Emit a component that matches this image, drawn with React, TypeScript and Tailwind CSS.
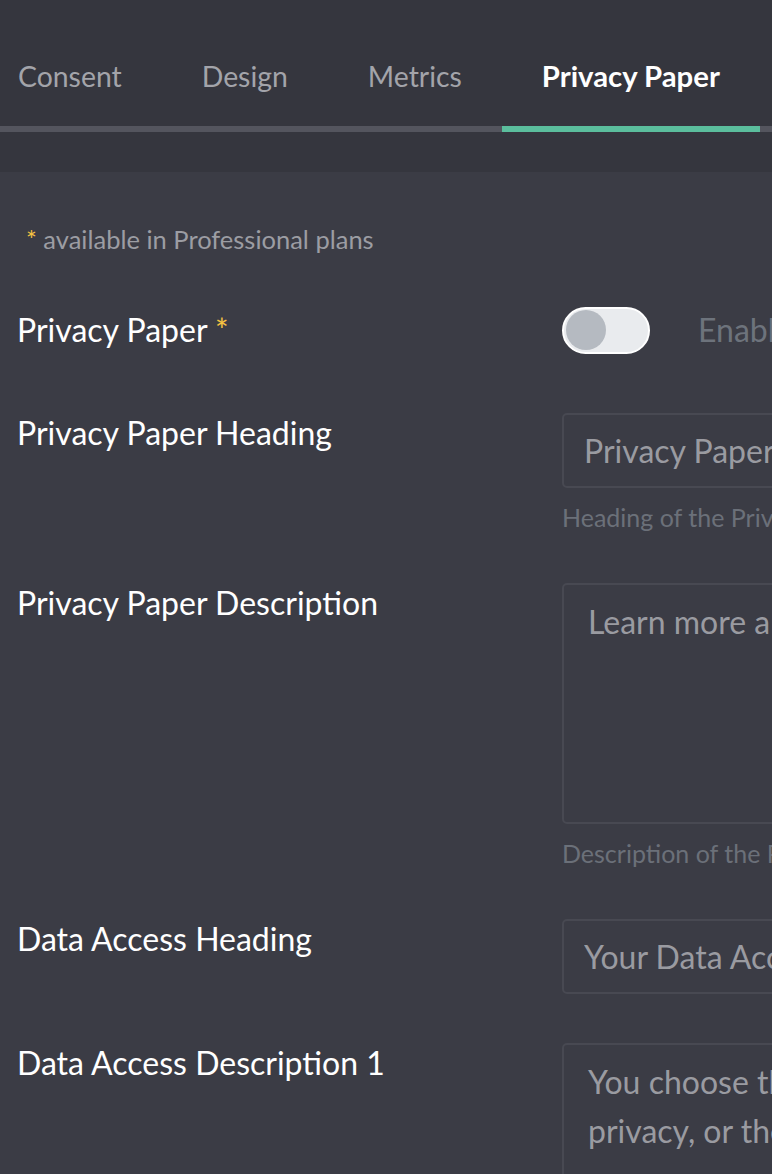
import { useState } from 'react'

const tabs = ['Consent', 'Design', 'Metrics', 'Privacy Paper']

function Toggle({ on, onChange }: { on: boolean; onChange: () => void }) {
  return (
    <button
      onClick={onChange}
      className={`w-[88px] h-[47px] rounded-full border-2 border-white p-[2px] flex items-center shrink-0 ${
        on ? 'bg-[#5bbe9d] justify-end' : 'bg-[#e9ebee] justify-start'
      }`}
    >
      <span className="block w-[40px] h-[40px] rounded-full bg-[#b5bac1]" />
    </button>
  )
}

function Row({ label, children }: { label: string; children: React.ReactNode }) {
  return (
    <div className="flex mb-[49px] w-[1300px]">
      <div className="w-[545px] shrink-0 text-[32px] leading-[40px] text-white whitespace-nowrap">
        {label}
      </div>
      <div className="w-[720px] shrink-0">{children}</div>
    </div>
  )
}

export default function App() {
  const [active, setActive] = useState('Privacy Paper')
  const [enabled, setEnabled] = useState(false)

  return (
    <div className="h-screen w-full overflow-hidden bg-[#3b3c45] font-['Lato','Noto_Sans',sans-serif]">
      {/* Tabs */}
      <div className="bg-[#35363e] pt-[58px] pb-[40px]">
        <div className="flex border-b-[6px] border-[#54555e] w-[1400px]">
          {tabs.map((t, i) => (
            <button
              key={t}
              onClick={() => setActive(t)}
              className={`${i === 0 ? 'pl-[18px]' : 'pl-10'} pr-10 pb-[32px] leading-[36px] -mb-[6px] border-b-[6px] whitespace-nowrap ${
                active === t
                  ? 'text-white font-bold text-[29.3px] border-[#5bbe9d]'
                  : 'text-[#a3a4aa] text-[28.4px] border-transparent'
              }`}
            >
              {t}
            </button>
          ))}
        </div>
      </div>

      {/* Form */}
      <div className="pl-[17px] pt-[52px]">
        <p className="pl-[9px] text-[25.5px] leading-[30px] text-[#9c9da3] mb-[52px] whitespace-nowrap">
          <span className="text-[#f5c242]">*</span> available in Professional plans
        </p>

        <div className="flex items-center mb-[59px] w-[1300px]">
          <div className="w-[545px] shrink-0 text-[32px] leading-[40px] text-white">
            Privacy Paper <span className="text-[#f5c242] align-top">*</span>
          </div>
          <Toggle on={enabled} onChange={() => setEnabled(!enabled)} />
          <span className="ml-[48px] text-[32px] text-[#6d737c] whitespace-nowrap">
            Enable Privacy Paper
          </span>
        </div>

        <Row label="Privacy Paper Heading">
          <input
            defaultValue="Privacy Paper"
            className="w-full h-[75px] rounded-[5px] border-2 border-[#484952] bg-transparent pl-[20px] text-[32px] text-[#9a9ba1] outline-none"
          />
          <p className="mt-[12px] text-[25px] leading-[34px] text-[#6b7079] whitespace-nowrap">
            Heading of the Privacy Paper
          </p>
        </Row>

        <Row label="Privacy Paper Description">
          <textarea
            defaultValue="Learn more about our data practices."
            className="block w-full h-[241px] resize-none rounded-[5px] border-2 border-[#484952] bg-transparent px-[24px] pt-[12px] text-[32px] leading-[49px] text-[#9a9ba1] outline-none"
          />
          <p className="mt-[12px] text-[25px] leading-[34px] text-[#6b7079] whitespace-nowrap">
            Description of the Privacy Paper
          </p>
        </Row>

        <Row label="Data Access Heading">
          <input
            defaultValue="Your Data Access"
            className="w-full h-[75px] rounded-[5px] border-2 border-[#484952] bg-transparent pl-[20px] text-[32px] text-[#9a9ba1] outline-none"
          />
        </Row>

        <Row label="Data Access Description 1">
          <textarea
            defaultValue={'You choose the level of protection for your\nprivacy, or the way your data is used by us.'}
            className="block w-full h-[241px] resize-none rounded-[5px] border-2 border-[#484952] bg-transparent px-[24px] pt-[12px] text-[32px] leading-[49px] text-[#9a9ba1] outline-none"
          />
        </Row>
      </div>
    </div>
  )
}
